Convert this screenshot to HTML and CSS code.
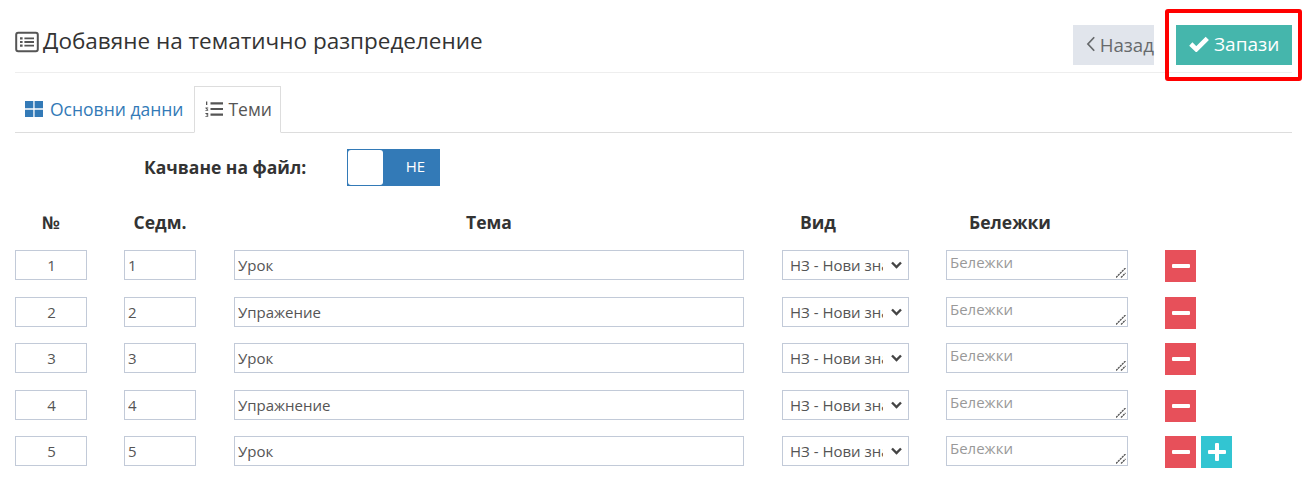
FILE: index.html
```html
<!DOCTYPE html>
<html lang="bg">
<head>
<meta charset="utf-8">
<title>Добавяне на тематично разпределение</title>
<link rel="stylesheet" href="styles.css">
</head>
<body>
<div class="page">
  <header class="head">
    <h1 class="title">
      <svg class="title-icon" viewBox="0 0 24 24" width="24" height="24"><rect x="1.200" y="2.700" width="21.600" height="18.600" rx="2" fill="none" stroke="#555" stroke-width="2"/><path d="M5 7.200h2.600v2.200H5zM5 10.900h2.600v2.200H5zM5 14.600h2.600v2.200H5zM9.400 7.400h9.600v1.800H9.400zM9.400 11.100h9.600v1.800H9.400zM9.400 14.800h9.600v1.800H9.400z" fill="#555"/></svg>
      Добавяне на тематично разпределение
    </h1>
    <div class="actions">
      <a class="btn btn-back"><svg viewBox="0 0 10 18" width="10" height="18"><path d="M8.500 2 2 9l6.500 7" fill="none" stroke="#676a6c" stroke-width="1.800"/></svg>Назад</a>
      <a class="btn btn-save"><svg viewBox="0 0 20 16" width="20" height="16"><path d="M1.800 8 7.300 13.300 18.300 2.300" fill="none" stroke="#fff" stroke-width="4.600"/></svg>Запази</a>
    </div>
  </header>

  <nav class="tabs">
    <a class="tab"><svg viewBox="0 0 18 16" width="18" height="16"><path d="M0 0h8.300v7.300H0zM9.600 0H18v7.300H9.600zM0 8.700h8.300V16H0zM9.600 8.700H18V16H9.600z" fill="#337ab7"/></svg>Основни данни</a>
    <a class="tab tab-active"><svg viewBox="0 0 18 16" width="18" height="16"><path d="M5.500 1.200H18v2.200H5.500zM5.500 6.900H18v2.200H5.500zM5.500 12.600H18v2.200H5.500z" fill="#555"/><path d="M1 .5h1.300v3.500H1zM.4 6.500h2.800v1H1.800l1.400 1.300v1H.4v-.8h1.700L.4 7.300zM.4 12h2.800v3.800H.4v-.8h1.900v-.7H1v-.7h1.300v-.7H.4z" fill="#555"/></svg>Теми</a>
  </nav>

  <div class="upload">
    <label class="upload-label">Качване на файл:</label>
    <div class="toggle"><span class="knob"></span><span class="toggle-text">НЕ</span></div>
  </div>

  <div class="grid">
    <div class="th">№</div><div class="th">Седм.</div><div class="th">Тема</div><div class="th">Вид</div><div class="th">Бележки</div><div class="th"></div>

    <div class="cell"><input class="field center" value="1"></div>
    <div class="cell"><input class="field" value="1"></div>
    <div class="cell"><input class="field" value="Урок"></div>
    <div class="cell"><select class="field pick"><option>НЗ - Нови знания</option></select></div>
    <div class="cell note-cell"><textarea class="field note" placeholder="Бележки"></textarea><svg class="grip" viewBox="0 0 10 10" width="10" height="10"><path d="M0 9.500 9.500 0M5 9.500 9.500 5" fill="none" stroke="#555" stroke-width="1.300" stroke-dasharray="2.200 .6"/></svg></div>
    <div class="ops"><button class="op op-del"><span class="minus"></span></button></div>

    <div class="cell"><input class="field center" value="2"></div>
    <div class="cell"><input class="field" value="2"></div>
    <div class="cell"><input class="field" value="Упражение"></div>
    <div class="cell"><select class="field pick"><option>НЗ - Нови знания</option></select></div>
    <div class="cell note-cell"><textarea class="field note" placeholder="Бележки"></textarea><svg class="grip" viewBox="0 0 10 10" width="10" height="10"><path d="M0 9.500 9.500 0M5 9.500 9.500 5" fill="none" stroke="#555" stroke-width="1.300" stroke-dasharray="2.200 .6"/></svg></div>
    <div class="ops"><button class="op op-del"><span class="minus"></span></button></div>

    <div class="cell"><input class="field center" value="3"></div>
    <div class="cell"><input class="field" value="3"></div>
    <div class="cell"><input class="field" value="Урок"></div>
    <div class="cell"><select class="field pick"><option>НЗ - Нови знания</option></select></div>
    <div class="cell note-cell"><textarea class="field note" placeholder="Бележки"></textarea><svg class="grip" viewBox="0 0 10 10" width="10" height="10"><path d="M0 9.500 9.500 0M5 9.500 9.500 5" fill="none" stroke="#555" stroke-width="1.300" stroke-dasharray="2.200 .6"/></svg></div>
    <div class="ops"><button class="op op-del"><span class="minus"></span></button></div>

    <div class="cell"><input class="field center" value="4"></div>
    <div class="cell"><input class="field" value="4"></div>
    <div class="cell"><input class="field" value="Упражнение"></div>
    <div class="cell"><select class="field pick"><option>НЗ - Нови знания</option></select></div>
    <div class="cell note-cell"><textarea class="field note" placeholder="Бележки"></textarea><svg class="grip" viewBox="0 0 10 10" width="10" height="10"><path d="M0 9.500 9.500 0M5 9.500 9.500 5" fill="none" stroke="#555" stroke-width="1.300" stroke-dasharray="2.200 .6"/></svg></div>
    <div class="ops"><button class="op op-del"><span class="minus"></span></button></div>

    <div class="cell"><input class="field center" value="5"></div>
    <div class="cell"><input class="field" value="5"></div>
    <div class="cell"><input class="field" value="Урок"></div>
    <div class="cell"><select class="field pick"><option>НЗ - Нови знания</option></select></div>
    <div class="cell note-cell"><textarea class="field note" placeholder="Бележки"></textarea><svg class="grip" viewBox="0 0 10 10" width="10" height="10"><path d="M0 9.500 9.500 0M5 9.500 9.500 5" fill="none" stroke="#555" stroke-width="1.300" stroke-dasharray="2.200 .6"/></svg></div>
    <div class="ops"><button class="op op-del"><span class="minus"></span></button><button class="op op-add"><span class="minus"></span><span class="bar"></span></button></div>
  </div>
</div>
<div class="highlight"></div>
</body>
</html>
```

FILE: styles.css
```css
* { box-sizing: border-box; }
html, body { margin: 0; padding: 0; background: #fff; }
body {
  font-family: "Open Sans", "Liberation Sans", sans-serif;
  color: #333;
  height: 494px;
  overflow: hidden;
  position: relative;
}
.page { padding: 25px 16px 0 15px; }

.head {
  display: flex;
  justify-content: space-between;
  height: 48px;
  border-bottom: 1px solid #eee;
}
.title {
  margin: 1px 0 0;
  font-size: 22.500px;
  font-weight: 400;
  line-height: 30px;
  color: #333;
  display: flex;
  align-items: center;
  gap: 4px;
  height: 30px;
}
.title-icon { display: block; margin-top: 2px; }
.actions { display: flex; gap: 22px; }
.btn {
  height: 40px;
  display: flex;
  align-items: center;
  font-size: 19px;
  gap: 5px;
  padding-bottom: 2px;
}
.btn-back { width: 81px; background: #e1e5ec; color: #676a6c; padding-left: 13px; font-size: 18.700px; gap: 4px; }
.btn-save { width: 116px; background: #45b6ac; color: #fff; padding-left: 13px; }

.tabs {
  display: flex;
  margin-top: 13px;
  height: 47px;
  border-bottom: 1px solid #ddd;
}
.tab {
  display: flex;
  align-items: center;
  gap: 7px;
  font-size: 17.500px;
  color: #337ab7;
  padding: 0 10px 2px 9px;
  height: 47px;
  border: 1px solid transparent;
}
.tab svg { margin-top: 1px; }
.tab-active {
  color: #555;
  padding: 0 8px 2px 10px;
  gap: 5px;
  border-color: #ddd;
  border-bottom-color: #fff;
}

.upload {
  display: flex;
  align-items: center;
  margin-top: 16px;
  height: 37px;
  padding-left: 129px;
}
.upload-label { font-size: 17.500px; font-weight: 700; width: 203px; padding-bottom: 2px; }
.toggle {
  width: 93px;
  height: 37px;
  background: #337ab7;
  position: relative;
  padding-left: 37px;
  display: flex;
  align-items: center;
  justify-content: center;
  color: #fff;
  font-size: 15px;
}
.knob {
  position: absolute;
  left: 1px;
  top: 1px;
  width: 35px;
  height: 35px;
  background: #fff;
  border-radius: 3px;
}
.toggle-text { display: block; padding: 0 0 3px 7px; }

.grid {
  display: grid;
  grid-template-columns: 109px 110px 548px 164px 219px 1fr;
  grid-auto-rows: 46.500px;
  margin-top: 17.500px;
}
.th {
  font-size: 17.500px;
  font-weight: 700;
  line-height: 36px;
  text-align: center;
}
.th:nth-child(1) { width: 72px; }
.th:nth-child(2) { width: 72px; }
.th:nth-child(3) { width: 510px; }
.th:nth-child(4) { width: 127px; text-align: left; padding-left: 18px; }
.th:nth-child(5) { width: 182px; text-align: left; padding-left: 23px; }
.cell:nth-child(6n+1) { padding-right: 37px; }
.cell:nth-child(6n+2) { padding-right: 38px; }
.cell:nth-child(6n+3) { padding-right: 38px; }
.cell:nth-child(6n+4) { padding-right: 37px; }
.cell:nth-child(6n+5) { padding-right: 37px; }
.field {
  display: block;
  width: 100%;
  height: 30px;
  border: 1px solid #c2cad8;
  border-radius: 0;
  background: #fff;
  font-family: inherit;
  font-size: 15px;
  color: #555;
  padding: 0 2px 0 3px;
  outline: none;
  margin: 0;
}
.center { text-align: center; }
.pick {
  appearance: none;
  -webkit-appearance: none;
  padding: 0 25px 0 7px;
  background-image: url("data:image/svg+xml,%3Csvg xmlns='http://www.w3.org/2000/svg' width='11' height='8'%3E%3Cpath d='M1 1.500 5.500 6 10 1.500' fill='none' stroke='%23444' stroke-width='2.400'/%3E%3C/svg%3E");
  background-repeat: no-repeat;
  background-position: right 6px center;
}
.note-cell { position: relative; }
.note { padding: 0 3px; line-height: 22px; resize: none; }
.note::placeholder { color: #999; opacity: 1; }
.grip { position: absolute; left: 170px; top: 18px; display: block; }
.ops { display: flex; gap: 5px; align-items: flex-start; }
.op {
  width: 31px;
  height: 32px;
  border: 0;
  padding: 0;
  position: relative;
  display: block;
}
.op-del { background: #e7505a; }
.op-add { background: #32c5d2; }
.minus {
  position: absolute;
  left: 7px;
  top: 14px;
  width: 18px;
  height: 4px;
  background: #fff;
  border-radius: 1px;
}
.bar {
  position: absolute;
  left: 14px;
  top: 7px;
  width: 4px;
  height: 18px;
  background: #fff;
  border-radius: 1px;
}

.highlight {
  position: absolute;
  left: 1165px;
  top: 9px;
  width: 137px;
  height: 72px;
  border: 4px solid #f00;
  border-radius: 3px;
  pointer-events: none;
}
```
